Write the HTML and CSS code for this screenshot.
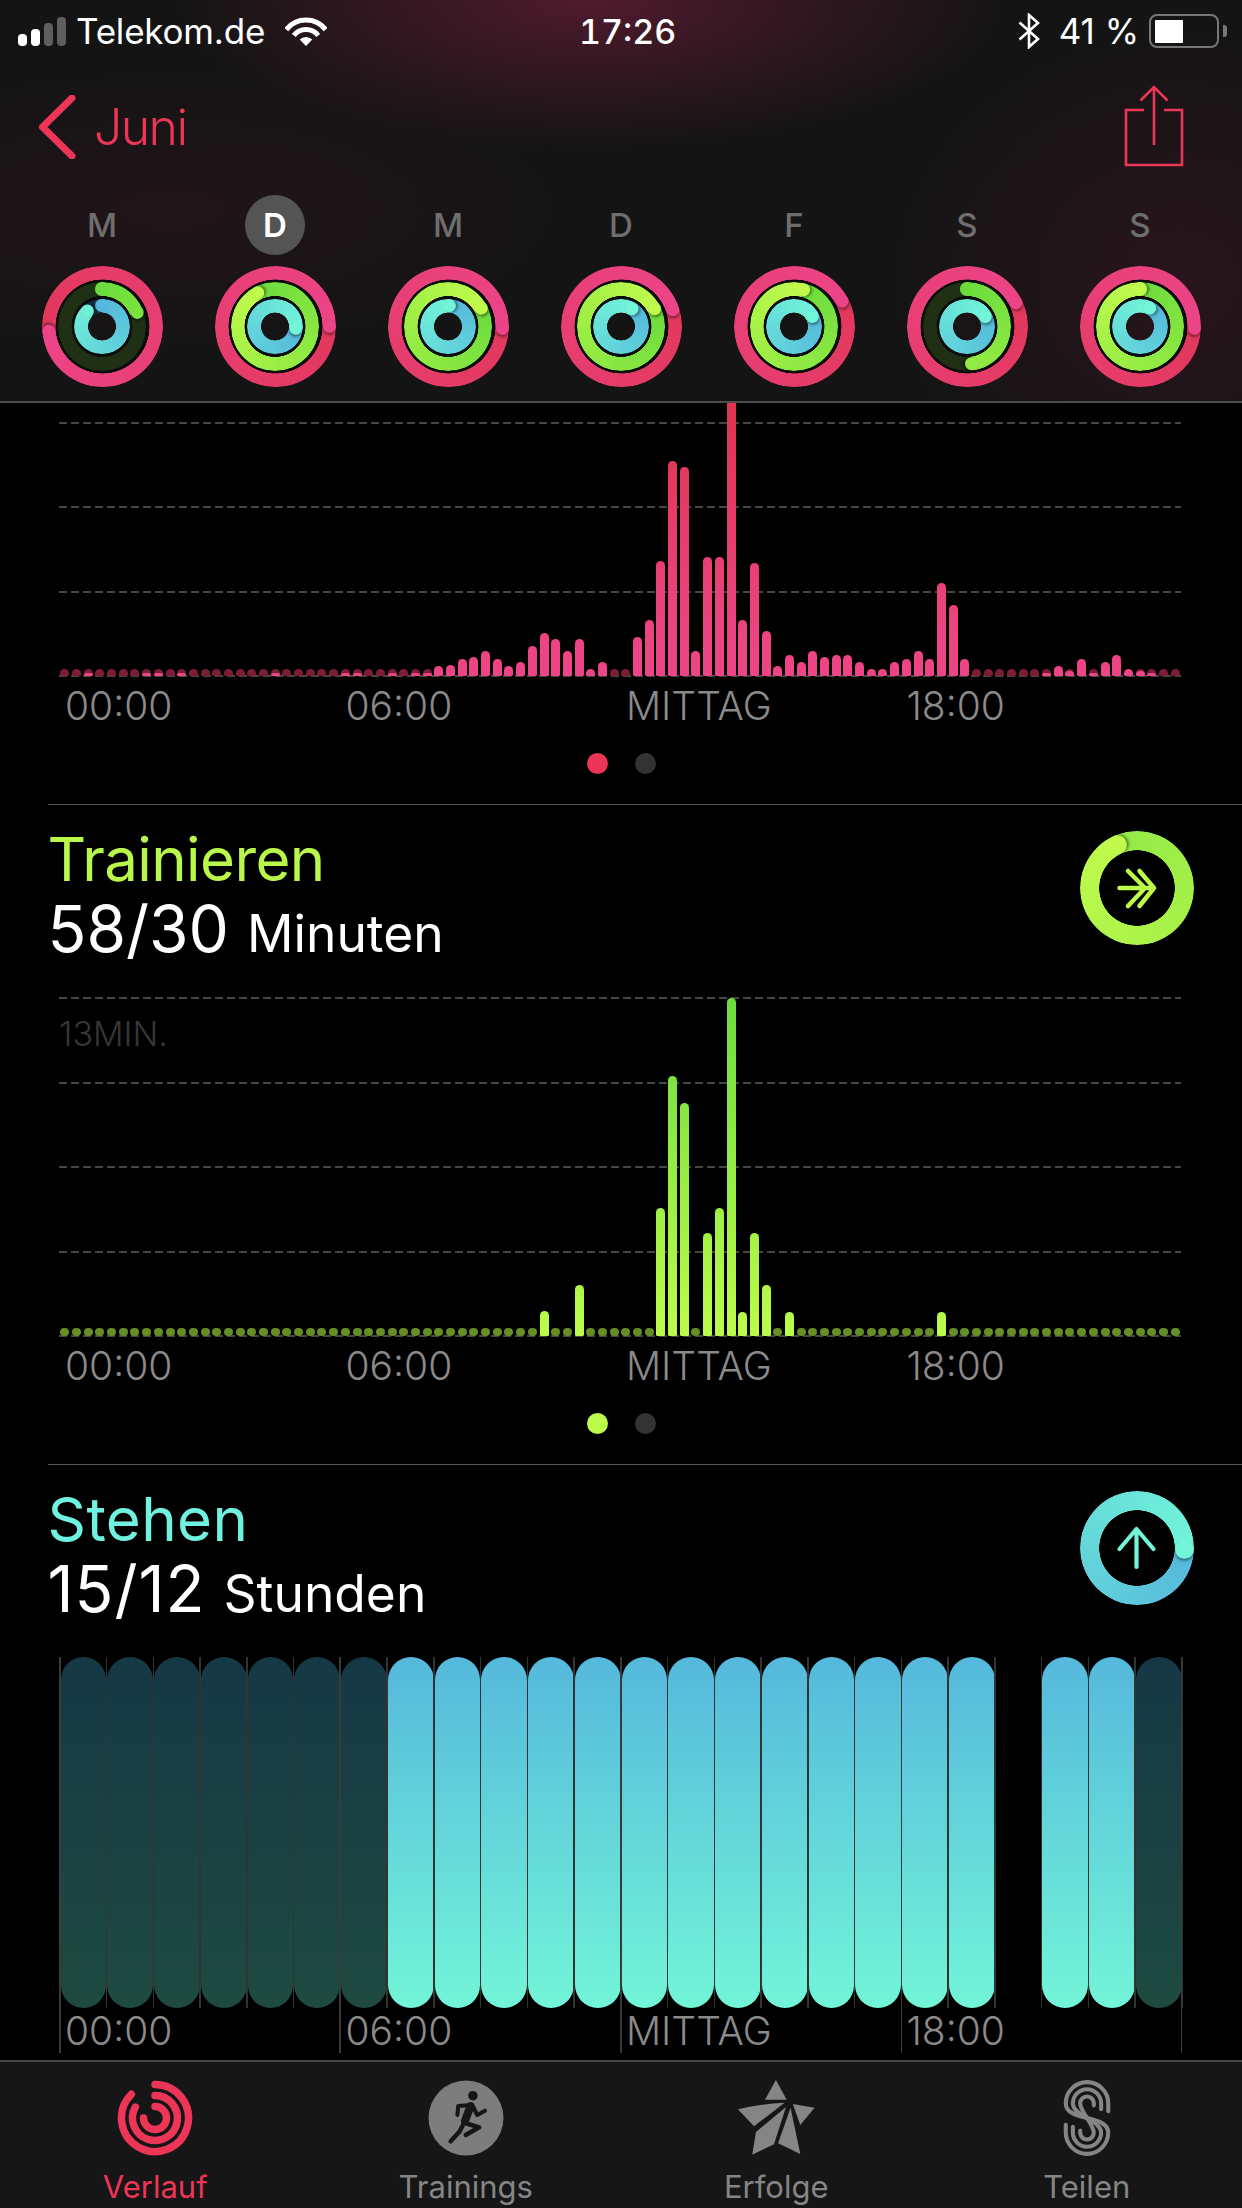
FILE: index.html
```html
<!DOCTYPE html>
<html lang="de">
<head>
<meta charset="utf-8">
<title>Aktivität</title>
<link rel="stylesheet" href="styles.css">
</head>
<body>
<div class="app">
  <header class="top">
    <div class="status">
      <div class="status-left">
        <span class="signal"><i class="sig s1"></i><i class="sig s2"></i><i class="sig s3"></i><i class="sig s4"></i></span>
        <span class="carrier">Telekom.de</span>
        <svg class="wifi" width="42" height="30" viewBox="0 0 42 30"><path d="M1.300 13.600A25 25 0 0 1 40.700 13.600" fill="none" stroke="#fff" stroke-width="5"/><path d="M8.800 19.500A15.500 15.500 0 0 1 33.200 19.500" fill="none" stroke="#fff" stroke-width="5"/><path d="M21 30L14.700 23.500A9 9 0 0 1 27.300 23.500Z" fill="#fff"/></svg>
      </div>
      <span class="time">17:26</span>
      <div class="status-right">
        <svg class="bt" width="22" height="36" viewBox="0 0 22 36"><path d="M1.500 9.500L20 26L11 34V2L20 10L1.500 26.500" fill="none" stroke="#fff" stroke-width="2.600"/></svg>
        <span class="pct">41 %</span>
        <span class="battery"><i class="battery-fill"></i></span>
        <i class="battery-nub"></i>
      </div>
    </div>
    <nav class="nav">
      <div class="back">
        <svg width="38" height="64" viewBox="0 0 38 64"><path d="M34 3L4.500 32L34 61" fill="none" stroke="#ec3557" stroke-width="7" stroke-linecap="round" stroke-linejoin="round"/></svg>
        <span class="back-label">Juni</span>
      </div>
      <svg class="share" width="60" height="82" viewBox="0 0 60 82"><path d="M20 25H2V80H58V25H40" fill="none" stroke="#ec3557" stroke-width="2.600"/><path d="M30 60V2M16.500 15.500L30 2L43.500 15.500" fill="none" stroke="#ec3557" stroke-width="2.600"/></svg>
    </nav>
    <div class="days">
      <span class="day">M</span>
      <span class="day day-on">D</span>
      <span class="day">M</span>
      <span class="day">D</span>
      <span class="day">F</span>
      <span class="day">S</span>
      <span class="day">S</span>
    </div>
    <div class="week" id="week"></div>
  </header>

  <main class="scroll">
    <section class="panel panel-first">
      <div class="plot plot-move" id="move">
        <i class="gl"></i><i class="gl"></i><i class="gl"></i><i class="gl"></i><i class="gl"></i>
      </div>
      <div class="hours"><span>00:00</span><span>06:00</span><span>MITTAG</span><span>18:00</span></div>
      <div class="pager"><i class="pg pg-move"></i><i class="pg"></i></div>
    </section>

    <section class="panel panel-rule">
      <div class="head">
        <div>
          <h2 class="title title-ex">Trainieren</h2>
          <p class="value"><span class="num">58/30</span><span class="unit">Minuten</span></p>
        </div>
        <div class="badge" id="badge-ex">
          <svg class="badge-glyph" width="114" height="114" viewBox="0 0 114 114"><path d="M39.500 57H72M48 40L65 57L48 75M59.500 40L74 57L59.500 75" fill="none" stroke="#bdfb4a" stroke-width="4.500" stroke-linecap="round" stroke-linejoin="round"/></svg>
        </div>
      </div>
      <div class="plot plot-ex" id="ex">
        <i class="gl"></i><i class="gl"></i><i class="gl"></i><i class="gl"></i><i class="gl"></i>
        <span class="scale">13MIN.</span>
      </div>
      <div class="hours"><span>00:00</span><span>06:00</span><span>MITTAG</span><span>18:00</span></div>
      <div class="pager"><i class="pg pg-ex"></i><i class="pg"></i></div>
    </section>

    <section class="panel panel-rule">
      <div class="head">
        <div>
          <h2 class="title title-st">Stehen</h2>
          <p class="value"><span class="num num-st">15/12</span><span class="unit">Stunden</span></p>
        </div>
        <div class="badge" id="badge-st">
          <svg class="badge-glyph" width="114" height="114" viewBox="0 0 114 114"><path d="M56.500 38V76M39.500 58L56.500 38L73.500 58" fill="none" stroke="#72f5d8" stroke-width="4.200" stroke-linecap="round" stroke-linejoin="round"/></svg>
        </div>
      </div>
      <div class="stand" id="stand"></div>
      <div class="hours hours-stand"><span>00:00</span><span>06:00</span><span>MITTAG</span><span>18:00</span></div>
    </section>
  </main>

  <footer class="tabs">
    <div class="tab tab-on">
      <svg width="76" height="76" viewBox="0 0 76 76"><g fill="none" stroke="#ec3557" stroke-width="7.500" stroke-linecap="round"><path d="M38 4.500A33.500 33.500 0 1 1 14.300 14.300"/><path d="M38 15.500A22.500 22.500 0 1 1 18.300 27.100"/><path d="M38 26.500A11.500 11.500 0 1 1 26.500 38"/></g></svg>
      <span class="tab-label">Verlauf</span>
    </div>
    <div class="tab">
      <svg width="76" height="76" viewBox="0 0 76 76"><circle cx="38" cy="38" r="37.500" fill="#7d7d7d"/><g fill="none" stroke="#161616" stroke-linecap="round" stroke-linejoin="round"><circle cx="44.900" cy="15.700" r="4.800" fill="#161616" stroke="none"/><path d="M29.400 35L30.200 26L43.300 25" stroke-width="4"/><path d="M45.300 27L49.200 35L57 30.700" stroke-width="4"/><path d="M42.500 26L37 41" stroke-width="8"/><path d="M37 43L51.200 47.300L37.700 55" stroke-width="4.500"/><path d="M36 43L31.400 51.700L22.700 61.300" stroke-width="4.500"/></g></svg>
      <span class="tab-label">Trainings</span>
    </div>
    <div class="tab">
      <svg width="82" height="80" viewBox="735 2080 82 80"><g fill="#858585"><path d="M775.900 2080L787.300 2100.700H764.400Z"/><path d="M735.900 2110.700Q760 2105 785 2104L752.900 2128.700Z"/><path d="M754.900 2134.700L786.500 2108.300L773.900 2147.700L751 2158.700Z"/><path d="M791.300 2109.300L801.600 2158L778.200 2146.700Z"/><path d="M793.700 2105.300L816.600 2109.300L801.600 2127.300Z"/></g></svg>
      <span class="tab-label">Erfolge</span>
    </div>
    <div class="tab">
      <svg width="48" height="78" viewBox="0 0 48 78"><g fill="none" stroke="#858585" stroke-width="4.200" stroke-linecap="round"><path d="M45.800 32V24A21.800 21.800 0 1 0 2.200 24C2.200 43 45.800 35 45.800 54A21.800 21.800 0 1 1 2.200 54V46"/><path d="M38.500 30V24A14.500 14.500 0 1 0 9.500 24C9.500 37 38.500 41 38.500 54A14.500 14.500 0 1 1 9.500 54V48"/><path d="M31 26V24A7 7 0 1 0 17 24C17 32 31 46 31 54A7 7 0 1 1 17 54V52"/></g></svg>
      <span class="tab-label">Teilen</span>
    </div>
  </footer>
</div>
<script src="app.js"></script>
</body>
</html>
```
FILE: styles.css
```css
* { box-sizing: border-box; }
html, body { margin: 0; padding: 0; background: #000; }
body { font-family: Inter, "Liberation Sans", sans-serif; color: #fff; }
h2, p { margin: 0; }
i { display: block; }

.app { width: 1242px; height: 2208px; display: flex; flex-direction: column; overflow: hidden; background: #000; }

/* header */
.top {
  height: 403px;
  border-bottom: 2px solid #4c4c4c;
  background:
    radial-gradient(ellipse 420px 150px at 590px 0, #4f1a2d 0, rgba(79,26,45,.55) 45%, rgba(79,26,45,0) 100%),
    radial-gradient(ellipse 300px 260px at 1180px 280px, rgba(70,22,40,.42) 0, rgba(70,22,40,0) 100%),
    radial-gradient(ellipse 420px 150px at 170px 210px, rgba(70,22,40,.25) 0, rgba(70,22,40,0) 100%),
    #141414;
}
.status { height: 62px; display: grid; grid-template-columns: 579px auto 1fr; align-items: center; }
.status-left { display: flex; align-items: center; padding-left: 18px; }
.signal { display: flex; align-items: flex-end; gap: 4.400px; width: 48px; height: 29px; }
.sig { width: 8.700px; border-radius: 4px; background: #fff; }
.s1 { height: 12px; }
.s2 { height: 17px; }
.s3 { height: 23px; background: #5e5e5e; }
.s4 { height: 29px; background: #5e5e5e; }
.carrier { font-size: 35px; margin-left: 10px; width: 209px; letter-spacing: -.2px; }
.wifi { display: block; margin-top: -1px; }
.time { font-size: 34px; font-weight: 500; font-variant-numeric: tabular-nums; }
.status-right { display: flex; align-items: center; justify-content: flex-end; padding-right: 15px; }
.bt { display: block; margin-right: 19px; }
.pct { font-size: 35px; margin-right: 10px; }
.battery { display: block; width: 70px; height: 34px; border: 2.500px solid #777; border-radius: 8px; padding: 3.500px; }
.battery-fill { width: 28px; height: 100%; background: #fff; border-radius: 1px; }
.battery-nub { width: 4px; height: 12px; background: #777; margin-left: 4px; border-radius: 0 3px 3px 0; }

.nav { height: 129px; margin-bottom: 4px; display: flex; align-items: center; justify-content: space-between; padding: 0 58.500px 0 38px; }
.back { display: flex; align-items: center; }
.back svg { display: block; }
.back-label { color: #ec3557; font-size: 50px; font-weight: 300; letter-spacing: -1.600px; margin-left: 18px; }
.share { display: block; margin-top: -1px; }

.days, .week { display: grid; grid-template-columns: repeat(7, 173px); padding: 0 15.500px; }
.days { height: 60px; }
.day { justify-self: center; width: 60px; height: 60px; border-radius: 50%; display: flex; align-items: center; justify-content: center; font-size: 33px; font-weight: 500; color: #6e6e6e; }
.day-on { background: #545454; color: #fff; font-weight: 600; }
.week { margin-top: 11px; }

/* rings */
.rings { justify-self: center; display: grid; place-items: center; width: 121px; height: 121px; background: radial-gradient(circle closest-side, transparent 23.800%, #0c0c0c 24.200%, #0c0c0c 78.500%, transparent 79%); }
.rings > * { grid-area: 1 / 1; }
.ring { width: var(--size); height: var(--size); border-radius: 50%;
  -webkit-mask: radial-gradient(circle closest-side, transparent calc(100% - var(--thick) - .5px), #000 calc(100% - var(--thick)));
  mask: radial-gradient(circle closest-side, transparent calc(100% - var(--thick) - .5px), #000 calc(100% - var(--thick))); }
.cap-turn { width: var(--size); height: var(--size); display: flex; justify-content: center; align-items: flex-start; }
.cap { width: var(--thick); height: var(--thick); border-radius: 50%; }
.cap-shadow { box-shadow: 2px 0 3px rgba(0,0,0,.45); }

/* scroll area */
.scroll { flex: 1; min-height: 0; overflow: hidden; }
.panel { padding-bottom: 30px; }
.panel:last-child { padding-bottom: 0; }
.panel-first { margin-top: -66px; }
.panel-rule::before { content: ""; display: block; height: 1px; margin-left: 48px; background: #555; }

.head { height: 192px; display: flex; justify-content: space-between; padding: 20px 48px 0 47.500px; }
.title { font-size: 60px; font-weight: 400; line-height: 69px; }
.title-ex { color: #b9f74a; letter-spacing: -.6px; }
.title-st { color: #70f2e0; letter-spacing: .4px; }
.value { display: flex; align-items: baseline; gap: 18px; line-height: 70px; white-space: nowrap; }
.num { font-size: 64px; }
.num-st { letter-spacing: 1px; }
.unit { font-size: 51.500px; }
.badge { display: grid; place-items: center; width: 114px; height: 114px; margin-top: 6px; }
.badge > * { grid-area: 1 / 1; }
.badge-glyph { display: block; }

.plot { position: relative; height: 340px; width: 1122px; margin-left: 59px; display: flex; flex-direction: column; justify-content: space-between; }
.gl { height: 2px; background: repeating-linear-gradient(90deg, #474747 0 8px, transparent 8px 12px); }
.bars { position: absolute; left: 0; right: 0; bottom: 1px; display: flex; align-items: flex-end; height: 100%; }
.slot { flex: 1; position: relative; display: flex; justify-content: center; align-items: flex-end; height: 100%; }
.dot, .bar { width: 9px; border-radius: 4.500px 4.500px 1.500px 1.500px; }
.dot { position: absolute; bottom: 0; left: 1.350px; }
.bar { position: relative; background-repeat: no-repeat; background-position: bottom; background-size: 100% 340px; }
.plot-move .dot { height: 7.500px; background: #7c1d36; }
.plot-move .bar { background-image: linear-gradient(to top, #ee4488, #ec4484 10%, #da3040); }
.plot-ex .dot { height: 8.500px; border-radius: 50%; background: #668e24; }
.plot-ex .bar { background-image: linear-gradient(to top, #bdfb4a, #6cdc3c); }
.scale { position: absolute; left: 0; top: 17px; font-size: 34px; line-height: 40px; font-weight: 300; color: #363636; }

.hours { display: grid; grid-template-columns: repeat(4, 280.500px); padding-left: 65px; margin-top: 6px; font-size: 39px; line-height: 46px; font-weight: 300; color: #8a8a8a; }
.hours-stand { margin-top: 0; }

.pager { display: flex; justify-content: center; gap: 27px; margin-top: 24px; }
.pg { width: 21px; height: 21px; border-radius: 50%; background: #333; }
.pg-move { background: #ec3557; }
.pg-ex { background: #bdfb4a; }

/* stand chart */
.stand { position: relative; width: 1122px; height: 351px; margin-left: 60px; display: flex; }
.stand::before { content: ""; position: absolute; left: -1px; top: 0; width: 1125px; height: 351px; background: repeating-linear-gradient(90deg, #333 0 1.500px, transparent 1.500px 46.750px); }
.stand::after { content: ""; position: absolute; left: -1px; top: 0; width: 1125px; height: 396px; background: repeating-linear-gradient(90deg, #3a3a3a 0 1.500px, transparent 1.500px 280.500px); }
.hour { flex: 1; padding: 0 .5px; }
.hour-fill { height: 100%; border-radius: 23px; }
.hour-on .hour-fill { background: linear-gradient(#55b8dc, #72f5d8); }
.hour-off .hour-fill { background: linear-gradient(#153845, #1e4a40); }

/* tab bar */
.tabs { height: 148px; border-top: 2px solid #474747; background: #161616; display: grid; grid-template-columns: repeat(4, 1fr); }
.tab { display: flex; flex-direction: column; align-items: center; padding-top: 18px; }
.tab svg { display: block; height: 76px; }
.tab-label { margin-top: 13px; font-size: 31px; line-height: 36px; color: #858585; }
.tab-on .tab-label { color: #ec3557; }
```
FILE: app.js
```js
var COL = {
  move: { a: [226, 56, 92], b: [236, 68, 136], track: '#3a0f1a' },
  ex: { a: [108, 220, 60], b: [192, 251, 76], track: '#203014' },
  st: { a: [85, 184, 220], b: [114, 245, 216], track: '#143040' }
};
function rgb(c) { return 'rgb(' + c.map(Math.round).join(',') + ')'; }
function mix(a, b, t) { return a.map(function (v, i) { return v + (b[i] - v) * t; }); }

/* closed ring: past 100 %, the tail runs from head all the way round to head.
   partial ring: stops at head on a dim track. */
function addRing(host, kind, size, thick, head, partial, start) {
  var c = COL[kind], a = start || c.a, tip = partial ? mix(a, c.b, head / 360) : c.b;
  var ring = document.createElement('div');
  ring.className = 'ring';
  ring.style.setProperty('--size', size + 'px');
  ring.style.setProperty('--thick', thick + 'px');
  ring.style.background = partial
    ? 'conic-gradient(' + rgb(a) + ' 0deg,' + rgb(tip) + ' ' + head + 'deg,' + c.track + ' ' + head + 'deg,' + c.track + ' 360deg)'
    : 'conic-gradient(from ' + head + 'deg,' + rgb(a) + ',' + rgb(c.b) + ')';
  host.appendChild(ring);
  if (partial) addCap(host, size, thick, 0, rgb(a), false);
  addCap(host, size, thick, head, rgb(tip), true);
}
function addCap(host, size, thick, angle, color, shadow) {
  var turn = document.createElement('div'), cap = document.createElement('i');
  turn.className = 'cap-turn';
  turn.style.setProperty('--size', size + 'px');
  turn.style.setProperty('--thick', thick + 'px');
  turn.style.transform = 'rotate(' + angle + 'deg)';
  cap.className = shadow ? 'cap cap-shadow' : 'cap';
  cap.style.background = color;
  turn.appendChild(cap);
  host.appendChild(turn);
}

/* [move head, exercise head, stand head]; objects mark a ring under 100 % */
var WEEK = [
  [265, { h: 68, p: 1 }, { h: 318, p: 1 }],
  [90, 332, 95],
  [92, 61, 5],
  [72, 62, 33],
  [62, 14, 62],
  [64, { h: 173, p: 1 }, 62],
  [92, 0, 29]
];
var week = document.getElementById('week');
WEEK.forEach(function (d) {
  var r = document.createElement('div');
  r.className = 'rings';
  [['move', 121], ['ex', 88.400], ['st', 55.400]].forEach(function (k, i) {
    var v = d[i], p = typeof v === 'object';
    addRing(r, k[0], k[1], 13.300, p ? v.h : v, p);
  });
  week.appendChild(r);
});

[['badge-ex', 'ex', 335, [148, 234, 70]], ['badge-st', 'st', 91, null]].forEach(function (b) {
  var host = document.getElementById(b[0]), glyph = host.firstElementChild;
  addRing(host, b[1], 114, 19, b[2], false, b[3]);
  host.appendChild(glyph);
});

function heights(map) {
  var out = [];
  for (var i = 0; i < 96; i++) out.push(map[i] || 0);
  return out;
}
var MOVE = heights({
  2: 3, 7: 3, 8: 3, 10: 3, 18: 3, 24: 3, 25: 3, 28: 3, 30: 3, 31: 3,
  32: 10, 33: 11, 34: 17, 35: 19, 36: 25, 37: 17, 38: 10, 39: 14, 40: 30, 41: 43, 42: 37, 43: 25, 44: 37, 45: 7, 46: 14,
  49: 39, 50: 56, 51: 115, 52: 215, 53: 209, 54: 25, 55: 119, 56: 119, 57: 300, 58: 56, 59: 113, 60: 45, 61: 10, 62: 21, 63: 14,
  64: 25, 65: 19, 66: 21, 67: 21, 68: 14, 69: 7, 70: 7, 71: 14, 72: 17, 73: 25, 74: 17, 75: 93, 76: 71, 77: 17,
  84: 3, 85: 10, 86: 5, 87: 17, 88: 3, 89: 14, 90: 21, 91: 7, 92: 5, 93: 3
});
var EX = heights({ 41: 25, 44: 51, 51: 128, 52: 260, 53: 233, 55: 103, 56: 128, 57: 338, 58: 24, 59: 103, 60: 51, 62: 24, 75: 24 });

function fillBars(id, data) {
  var plot = document.getElementById(id), bars = document.createElement('div');
  bars.className = 'bars';
  data.forEach(function (h) {
    var slot = document.createElement('div');
    slot.className = 'slot';
    if (h < 7) { var d = document.createElement('i'); d.className = 'dot'; slot.appendChild(d); }
    if (h > 0) { var b = document.createElement('i'); b.className = 'bar'; b.style.height = h + 'px'; slot.appendChild(b); }
    bars.appendChild(slot);
  });
  plot.appendChild(bars);
}
fillBars('move', MOVE);
fillBars('ex', EX);

var stand = document.getElementById('stand');
for (var h = 0; h < 24; h++) {
  var cell = document.createElement('div'), fill = document.createElement('i');
  cell.className = 'hour ' + (h === 20 ? 'hour-none' : (h < 7 || h === 23 ? 'hour-off' : 'hour-on'));
  fill.className = 'hour-fill';
  if (h !== 20) cell.appendChild(fill);
  stand.appendChild(cell);
}
```
